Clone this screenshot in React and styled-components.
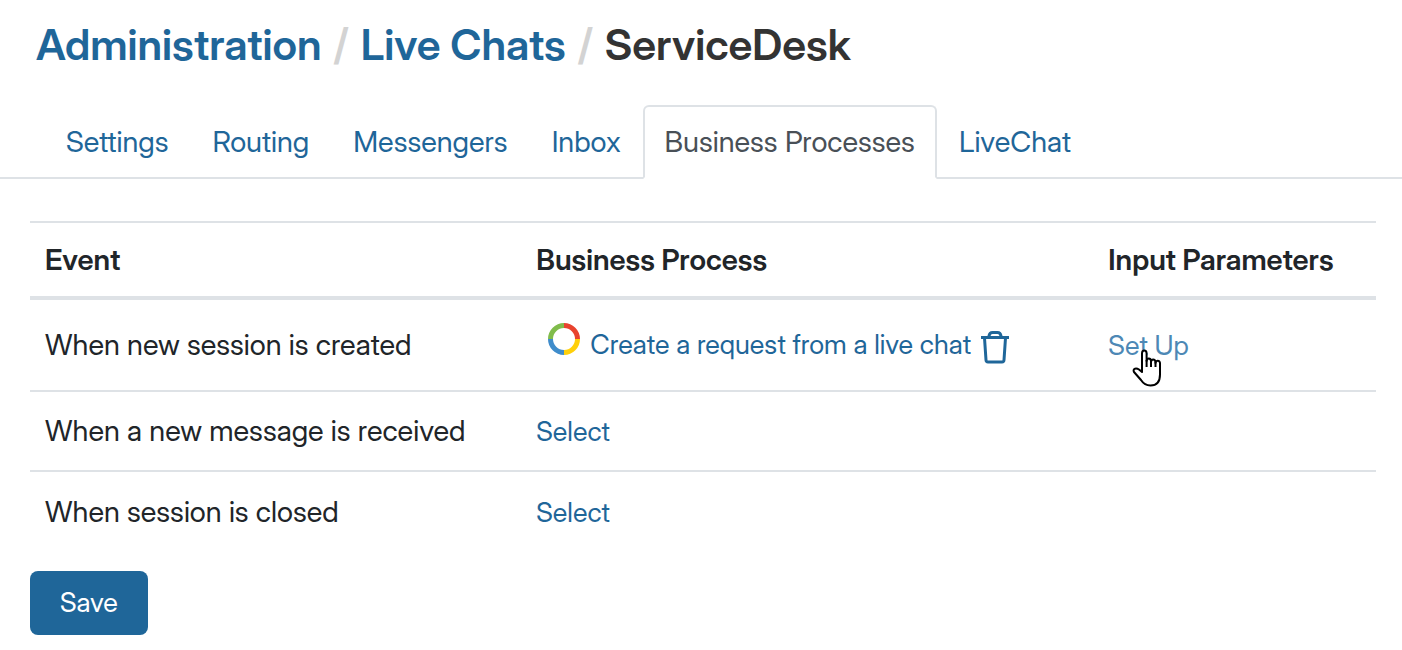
import React from 'react';
import styled, { createGlobalStyle } from 'styled-components';

const colors = {
  link: '#1f6699',
  linkHover: '#4d88b5',
  text: '#212529',
  title: '#333333',
  muted: '#d3d3d3',
  border: '#dee2e6',
  activeTab: '#495057',
};

const GlobalStyle = createGlobalStyle`
  * {
    box-sizing: border-box;
  }

  body {
    margin: 0;
    background: #fff;
    color: ${colors.text};
    font-family: 'Inter Display', Inter, 'Liberation Sans', sans-serif;
    font-size: 29px;
    line-height: 40px;
  }
`;

const Link = styled.a`
  color: ${props => (props.$hovered ? colors.linkHover : colors.link)};
  text-decoration: none;
`;

const Breadcrumbs = styled.nav`
  padding: 19px 36px 0;
  font-size: 43px;
  font-weight: 600;
  line-height: 50px;
`;

const Crumbs = styled.ol`
  display: flex;
  flex-wrap: wrap;
  gap: 12px;
  margin: 0;
  padding: 0;
  list-style: none;
`;

const Crumb = styled.li`
  display: flex;
  gap: 12px;
  color: ${colors.title};

  & + &::before {
    content: '/';
    color: ${colors.muted};
  }
`;

const Tabs = styled.nav`
  display: flex;
  margin-top: 36px;
  padding: 0 44px;
  border-bottom: 2px solid ${colors.border};
`;

const Tab = styled(Link)`
  margin-bottom: -2px;
  padding: 15px 20px;
  border: 2px solid transparent;
  border-radius: 6px 6px 0 0;

  &[aria-current] {
    color: ${colors.activeTab};
    border-color: ${colors.border} ${colors.border} #fff;
    background: #fff;
  }
`;

const Content = styled.main`
  padding: 42px 26px 16px 30px;
`;

const Table = styled.table`
  width: 100%;
  table-layout: fixed;
  border-spacing: 0;
  border-top: 2px solid ${colors.border};
`;

const Column = styled.col`
  width: ${props => props.$width};
`;

const HeadCell = styled.th`
  padding: 17px 15px 16px;
  border-bottom: 4px solid ${colors.border};
  font-weight: 600;
  text-align: left;
  white-space: nowrap;
`;

const Row = styled.tr`
  &:not(:last-child) > td {
    border-bottom: 2px solid ${colors.border};
  }
`;

const Cell = styled.td`
  height: ${props => (props.$tall ? '92px' : '80px')};
  padding: 0 15px;
  white-space: nowrap;
`;

const CellLink = styled(Link)`
  font-size: 27px;
`;

const Process = styled.div`
  display: flex;
  align-items: center;
  gap: 10px;
  padding-left: 12px;
`;

const ProcessLogo = styled.svg`
  width: 32px;
  height: 32px;
  margin-bottom: 12px;
`;

const DeleteButton = styled.button`
  display: flex;
  padding: 4px 0 0;
  border: 0;
  background: none;
  color: ${colors.link};
`;

const SetUp = styled.span`
  position: relative;
`;

const Pointer = styled.svg`
  position: absolute;
  top: 22px;
  left: 24px;
  pointer-events: none;
`;

const SaveButton = styled.button`
  margin-top: 19px;
  padding: 12px 30px;
  border: 0;
  border-radius: 8px;
  background: ${colors.link};
  color: #fff;
  font: inherit;
  font-size: 27px;
`;

const RingIcon = () =>
  <ProcessLogo viewBox="0 0 32 32" fill="none" strokeWidth="5" aria-hidden="true">
    <path d="M16 2.5A13.5 13.5 0 0 1 29.5 16" stroke="#e8432e" />
    <path d="M29.5 16A13.5 13.5 0 0 1 16 29.5" stroke="#ffd00a" />
    <path d="M16 29.5A13.5 13.5 0 0 1 2.5 16" stroke="#3f8ccb" />
    <path d="M2.5 16A13.5 13.5 0 0 1 16 2.5" stroke="#80bc4b" />
  </ProcessLogo>;

const TrashIcon = () =>
  <svg width="28" height="34" viewBox="0 0 28 34" fill="none" stroke="currentColor">
    <path d="M0 7.5H28" strokeWidth="3" />
    <path d="M8 7V6Q8.500 2.500 11.500 2.500H16.500Q19.500 2.500 20 6V7" strokeWidth="3" />
    <path d="M3.500 8L5 30Q5.100 32 7 32H21Q22.900 32 23 30L24.500 8" strokeWidth="3" />
  </svg>;

const HandPointer = () =>
  <Pointer width="30" height="38" viewBox="0 0 30 38" aria-hidden="true">
    <path
      d="M10 22V4.500Q10 1.500 12.300 1.500T14.600 4.500V12Q14.800 9.500 16.800 9.500T19 12V13Q19.300 10.500 21.200 10.500T23.500 13V14Q24 11.800 25.800 11.800T28 14V25.500Q28 36.500 18.500 36.500Q12.500 36.500 9 31L2 23Q.8 20.500 3 19.700Q5 19.300 7 20.500L10 23Z"
      fill="#fff"
      stroke="#000"
      strokeWidth="2"
      strokeLinejoin="round"
    />
    <path d="M14.600 11V18M19 12V18M23.500 13V18" stroke="#000" strokeWidth="2" />
  </Pointer>;

const tabs = [
  'Settings',
  'Routing',
  'Messengers',
  'Inbox',
  'Business Processes',
  'LiveChat',
];

const App = () =>
  <>
    <GlobalStyle />
    <Breadcrumbs aria-label="Breadcrumb">
      <Crumbs>
        <Crumb>
          <Link href="#administration">Administration</Link>
        </Crumb>
        <Crumb>
          <Link href="#live-chats">Live Chats</Link>
        </Crumb>
        <Crumb aria-current="page">ServiceDesk</Crumb>
      </Crumbs>
    </Breadcrumbs>
    <Tabs aria-label="Live chat sections">
      {tabs.map(tab =>
        <Tab
          key={tab}
          href="#tab"
          aria-current={tab === 'Business Processes' ? 'page' : undefined}
        >
          {tab}
        </Tab>
      )}
    </Tabs>
    <Content>
      <Table>
        <colgroup>
          <Column $width="36.5%" />
          <Column $width="42.5%" />
          <Column $width="21%" />
        </colgroup>
        <thead>
          <tr>
            <HeadCell scope="col">Event</HeadCell>
            <HeadCell scope="col">Business Process</HeadCell>
            <HeadCell scope="col">Input Parameters</HeadCell>
          </tr>
        </thead>
        <tbody>
          <Row>
            <Cell $tall>When new session is created</Cell>
            <Cell>
              <Process>
                <RingIcon />
                <CellLink href="#process">
                  Create a request from a live chat
                </CellLink>
                <DeleteButton type="button" aria-label="Delete">
                  <TrashIcon />
                </DeleteButton>
              </Process>
            </Cell>
            <Cell>
              <SetUp>
                <CellLink href="#set-up" $hovered>
                  Set Up
                </CellLink>
                <HandPointer />
              </SetUp>
            </Cell>
          </Row>
          <Row>
            <Cell>When a new message is received</Cell>
            <Cell>
              <CellLink href="#select">Select</CellLink>
            </Cell>
            <Cell />
          </Row>
          <Row>
            <Cell>When session is closed</Cell>
            <Cell>
              <CellLink href="#select">Select</CellLink>
            </Cell>
            <Cell />
          </Row>
        </tbody>
      </Table>
      <SaveButton type="button">Save</SaveButton>
    </Content>
  </>;

export default App;
